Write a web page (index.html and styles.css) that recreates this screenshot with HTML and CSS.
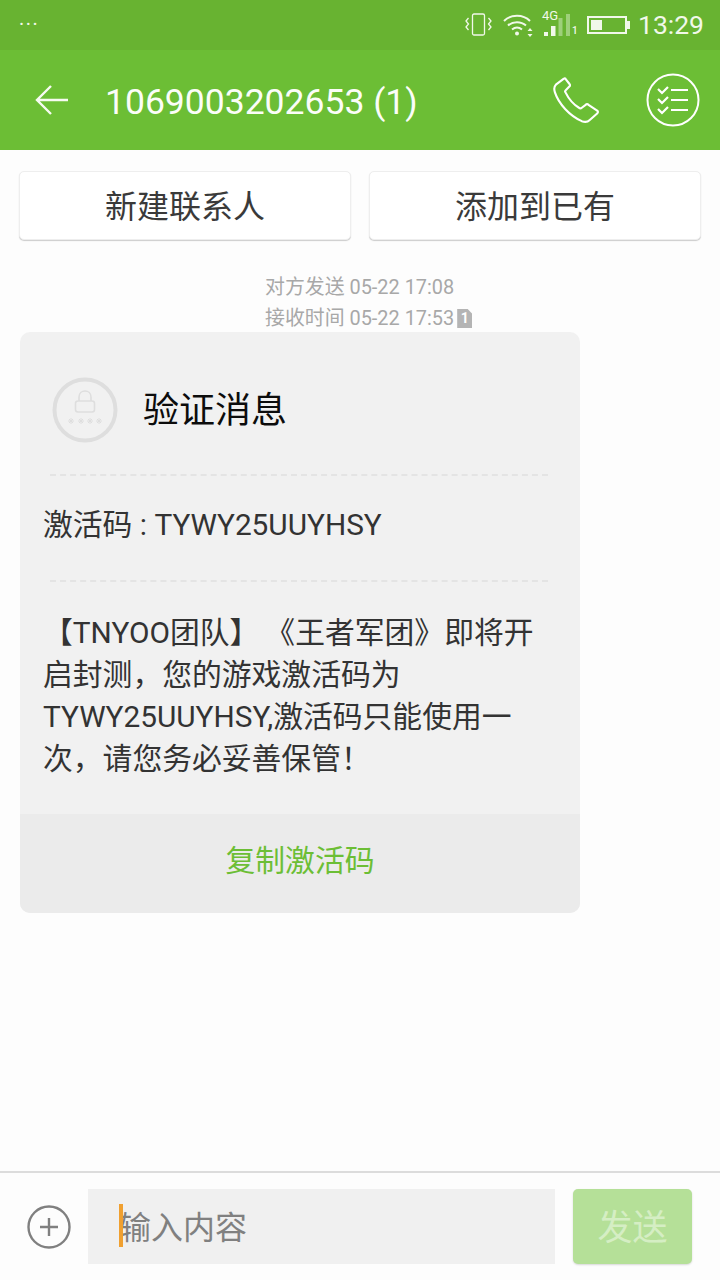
FILE: index.html
```html
<!DOCTYPE html>
<html lang="zh-CN">

<head>
    <meta charset="UTF-8">
    <title>短信</title>
    <link rel="stylesheet" href="styles.css">
</head>

<body>
    <div class="phone">
        <div class="status">
            <span class="dots">...</span>
            <div class="status-icons">
                <svg class="ic-vibrate" width="28" height="24" viewBox="0 0 28 24" fill="none" stroke="#f1f8ea" stroke-width="1.300">
                    <rect x="7.500" y="1" width="12" height="21" rx="1.500" />
                    <path d="M3.500 5l-2.500 3 2.500 3-2.500 3 2.500 3 M23.500 5l2.500 3-2.500 3 2.500 3-2.500 3" />
                </svg>
                <svg class="ic-wifi" width="32" height="24" viewBox="0 0 32 24" fill="none" stroke="#f1f8ea" stroke-width="2">
                    <path d="M1 8c7-7 19-7 26 0M5 12.500c5-4.500 13-4.500 18 0M9 16.500c3-2.500 7-2.500 10 0" />
                    <circle cx="14" cy="20.500" r="2" fill="#f1f8ea" stroke="none" />
                    <path d="M27 15l-2.500 3h5zM27 24l-2.500-3h5z" fill="#f1f8ea" stroke="none" />
                </svg>
                <div class="signal">
                    <span class="net">4G</span>
                    <svg width="36" height="26" viewBox="0 0 36 26">
                        <rect x="0" y="20" width="4" height="4" fill="#f1f8ea" />
                        <rect x="7" y="14" width="4.500" height="10" fill="#f1f8ea" />
                        <rect x="14.500" y="6" width="4" height="18" fill="#9ed07a" />
                        <rect x="22" y="2" width="4" height="22" fill="#9ed07a" />
                    </svg>
                    <span class="sim">1</span>
                </div>
                <div class="battery">
                    <div class="battery-body"><div class="battery-level"></div></div>
                    <div class="battery-tip"></div>
                </div>
                <span class="clock">13:29</span>
            </div>
        </div>

        <div class="toolbar">
            <svg class="back" width="34" height="32" viewBox="0 0 34 32" fill="none" stroke="#f7fbf2" stroke-width="2.400">
                <path d="M33 16H2M16 2L2 16l14 14" />
            </svg>
            <h1 class="title">1069003202653 (1)</h1>
            <svg class="phone-ic" width="48" height="48" viewBox="0 0 50 50" fill="none" stroke="#fff" stroke-width="2.200" stroke-linejoin="round">
                <path d="M11 2L3 8c-2 2-2 5-1 8 4 12 15 24 28 30 3 1 6 1 8-1l8-7c1-1 1-2 0-3l-9-6c-1-1-2-1-3 0l-4 3c-1 1-2 1-3 0-5-3-11-10-14-16-1-1 0-2 1-3l3-3c1-1 1-2 0-3L13 2c0-1-1-1-2 0z" />
            </svg>
            <svg class="list-ic" width="54" height="54" viewBox="0 0 54 54" fill="none" stroke="#fff" stroke-width="2">
                <circle cx="27" cy="27" r="25.500" />
                <path d="M25 17h17M25 27h17M25 37h17" />
                <path d="M12 16l4 4 6-6M12 26l4 4 6-6M12 36l4 4 6-6" stroke-width="2.200" />
            </svg>
        </div>

        <div class="actions">
            <a href="javascript:;" class="action">新建联系人</a>
            <a href="javascript:;" class="action">添加到已有</a>
        </div>

        <div class="thread">
            <div class="meta">
                <p>对方发送 05-22 17:08</p>
                <p>接收时间 05-22 17:53<span class="sim-mark">1</span></p>
            </div>

            <div class="card">
                <div class="card-head">
                    <svg class="lock" width="66" height="66" viewBox="0 0 66 66" fill="none" stroke="#dedede">
                        <circle cx="33" cy="33" r="30.500" stroke-width="4" />
                        <rect x="23.500" y="24" width="19" height="11" rx="2.500" stroke-width="1.600" />
                        <path d="M27 24v-4c0-8 12-8 12 0v4" stroke-width="1.600" />
                        <path d="M16 44h6M19 41v6M17 42l4 4M21 42l-4 4M26 44h6M29 41v6M27 42l4 4M31 42l-4 4M35 44h6M38 41v6M36 42l4 4M40 42l-4 4M44 44h6M47 41v6M45 42l4 4M49 42l-4 4" stroke-width="1" />
                    </svg>
                    <span class="card-title">验证消息</span>
                </div>
                <div class="card-code">
                    <span class="code-text">激活码 : TYWY25UUYHSY</span>
                </div>
                <div class="card-text">【TNYOO团队】&#8201;《王者军团》即将开启封测，您的游戏激活码为TYWY25UUYHSY,激活码只能使用一次，请您务必妥善保管！</div>
                <a href="javascript:;" class="card-copy">复制激活码</a>
            </div>
        </div>

        <div class="composer">
            <svg class="add" width="44" height="44" viewBox="0 0 44 44" fill="none" stroke="#808080" stroke-width="2.400">
                <circle cx="22" cy="22" r="20.500" />
                <path d="M22 13v18M13 22h18" />
            </svg>
            <div class="input">
                <span class="caret"></span>
                <span class="placeholder">输入内容</span>
            </div>
            <a href="javascript:;" class="send">发送</a>
        </div>
    </div>
</body>

</html>
```

FILE: styles.css
```css
* {
    box-sizing: border-box;
}

html,
body {
    margin: 0;
    padding: 0;
}

body {
    font-family: Roboto, "Noto Sans CJK SC", sans-serif;
    background-color: #fdfdfd;
    text-spacing-trim: space-all;
}

p,
h1 {
    margin: 0;
}

a {
    text-decoration: none;
}

.phone {
    width: 720px;
    height: 1280px;
    display: flex;
    flex-direction: column;
    overflow: hidden;
}

.status {
    height: 50px;
    flex: none;
    display: flex;
    align-items: center;
    justify-content: space-between;
    padding: 0 16px 0 19px;
    background-color: #68b331;
    color: #f1f8ea;
}

.dots {
    font-size: 20px;
    line-height: 18px;
    letter-spacing: 1.500px;
    margin-top: -14px;
}

.status-icons {
    display: flex;
    align-items: center;
}

.ic-vibrate {
    margin-right: 10px;
}

.ic-wifi {
    margin-right: 9px;
}

.signal {
    position: relative;
    width: 36px;
    height: 26px;
    margin-right: 7px;
}

.signal svg {
    display: block;
}

.net {
    position: absolute;
    top: -2px;
    left: -2px;
    font-size: 13px;
    line-height: 12px;
}

.sim {
    position: absolute;
    left: 28px;
    bottom: 2px;
    font-size: 10px;
    line-height: 10px;
    font-weight: 500;
}

.battery {
    display: flex;
    align-items: center;
    margin-right: 8px;
}

.battery-body {
    width: 40px;
    height: 18px;
    border: 2px solid #f1f8ea;
    padding: 2px;
}

.battery-level {
    width: 11px;
    height: 100%;
    background-color: #f1f8ea;
}

.battery-tip {
    width: 3px;
    height: 8px;
    background-color: #f1f8ea;
}

.clock {
    font-size: 26.500px;
    line-height: 30px;
}

.toolbar {
    height: 100px;
    flex: none;
    display: flex;
    align-items: center;
    background-color: #6cbe35;
    color: #fbfdf8;
}

.back {
    margin-left: 35px;
}

.title {
    flex: 1;
    margin: 4px 0 0 36px;
    font-size: 35.500px;
    line-height: 44px;
    font-weight: 400;
}

.phone-ic {
    margin: 2px 45px 0 0;
}

.list-ic {
    margin-right: 20px;
}

.actions {
    flex: none;
    display: flex;
    gap: 18px;
    padding: 21px 19px 1px;
}

.action {
    width: 332px;
    height: 69px;
    display: flex;
    align-items: center;
    justify-content: center;
    padding-bottom: 3px;
    background-color: #fff;
    border-radius: 5px;
    border: 1px solid #eee;
    box-shadow: 0 1px 1px #ccc;
    font-size: 32px;
    color: #3a3a3a;
}

.thread {
    flex: 1;
    padding: 31px 20px 0;
}

.meta {
    padding-left: 245px;
    margin-bottom: -2px;
    font-size: 19.900px;
    line-height: 31px;
    color: #a8a8a8;
}

.sim-mark {
    display: inline-block;
    width: 15px;
    height: 19px;
    margin-left: 3px;
    background-color: #b4b4b4;
    color: #fff;
    font-size: 14px;
    line-height: 19px;
    font-weight: 700;
    text-align: center;
    vertical-align: 2px;
    clip-path: polygon(0 0, 70% 0, 100% 25%, 100% 100%, 0 100%);
}

.card {
    width: 560px;
    border-radius: 10px;
    overflow: hidden;
    background-color: #f1f1f1;
}

.card-head {
    height: 144px;
    display: flex;
    align-items: center;
    margin: 0 32px 0 30px;
    padding-top: 12px;
    border-bottom: 2px dashed #e4e4e4;
}

.lock {
    flex: none;
    margin: 2px 0 0 2px;
}

.card-title {
    margin: -4px 0 0 25px;
    font-size: 36px;
    color: #0c0c0c;
}

.card-code {
    height: 106px;
    margin: 0 32px 0 30px;
    padding-top: 25px;
    border-bottom: 2px dashed #e4e4e4;
    font-size: 29.800px;
    line-height: 48px;
    color: #333;
}

.code-text {
    margin-left: -7px;
}

.card-text {
    height: 232px;
    padding: 30px 30px 0 23px;
    font-size: 29.800px;
    line-height: 42px;
    color: #333;
}

.card-copy {
    height: 99px;
    display: flex;
    align-items: center;
    justify-content: center;
    padding-bottom: 12px;
    background-color: #ebebeb;
    font-size: 29.800px;
    color: #6cbe35;
}

.composer {
    height: 109px;
    flex: none;
    display: flex;
    align-items: center;
    border-top: 2px solid #dcdcdc;
    padding-left: 27px;
    background-color: #fdfdfd;
}

.input {
    position: relative;
    width: 467px;
    height: 75px;
    margin-left: 17px;
    padding: 0 0 4px 31px;
    display: flex;
    align-items: center;
    background-color: #f0f0f0;
    font-size: 32px;
    color: #808080;
}

.caret {
    position: absolute;
    left: 31px;
    top: 15px;
    width: 4px;
    height: 43px;
    background-color: #f0a030;
}

.send {
    width: 119px;
    height: 75px;
    margin-left: 18px;
    display: flex;
    align-items: center;
    justify-content: center;
    padding-bottom: 4px;
    border-radius: 5px;
    background-color: #b5e098;
    box-shadow: 0 1px 2px rgba(0, 0, 0, .15);
    font-size: 35px;
    color: #d5eec4;
}
```
